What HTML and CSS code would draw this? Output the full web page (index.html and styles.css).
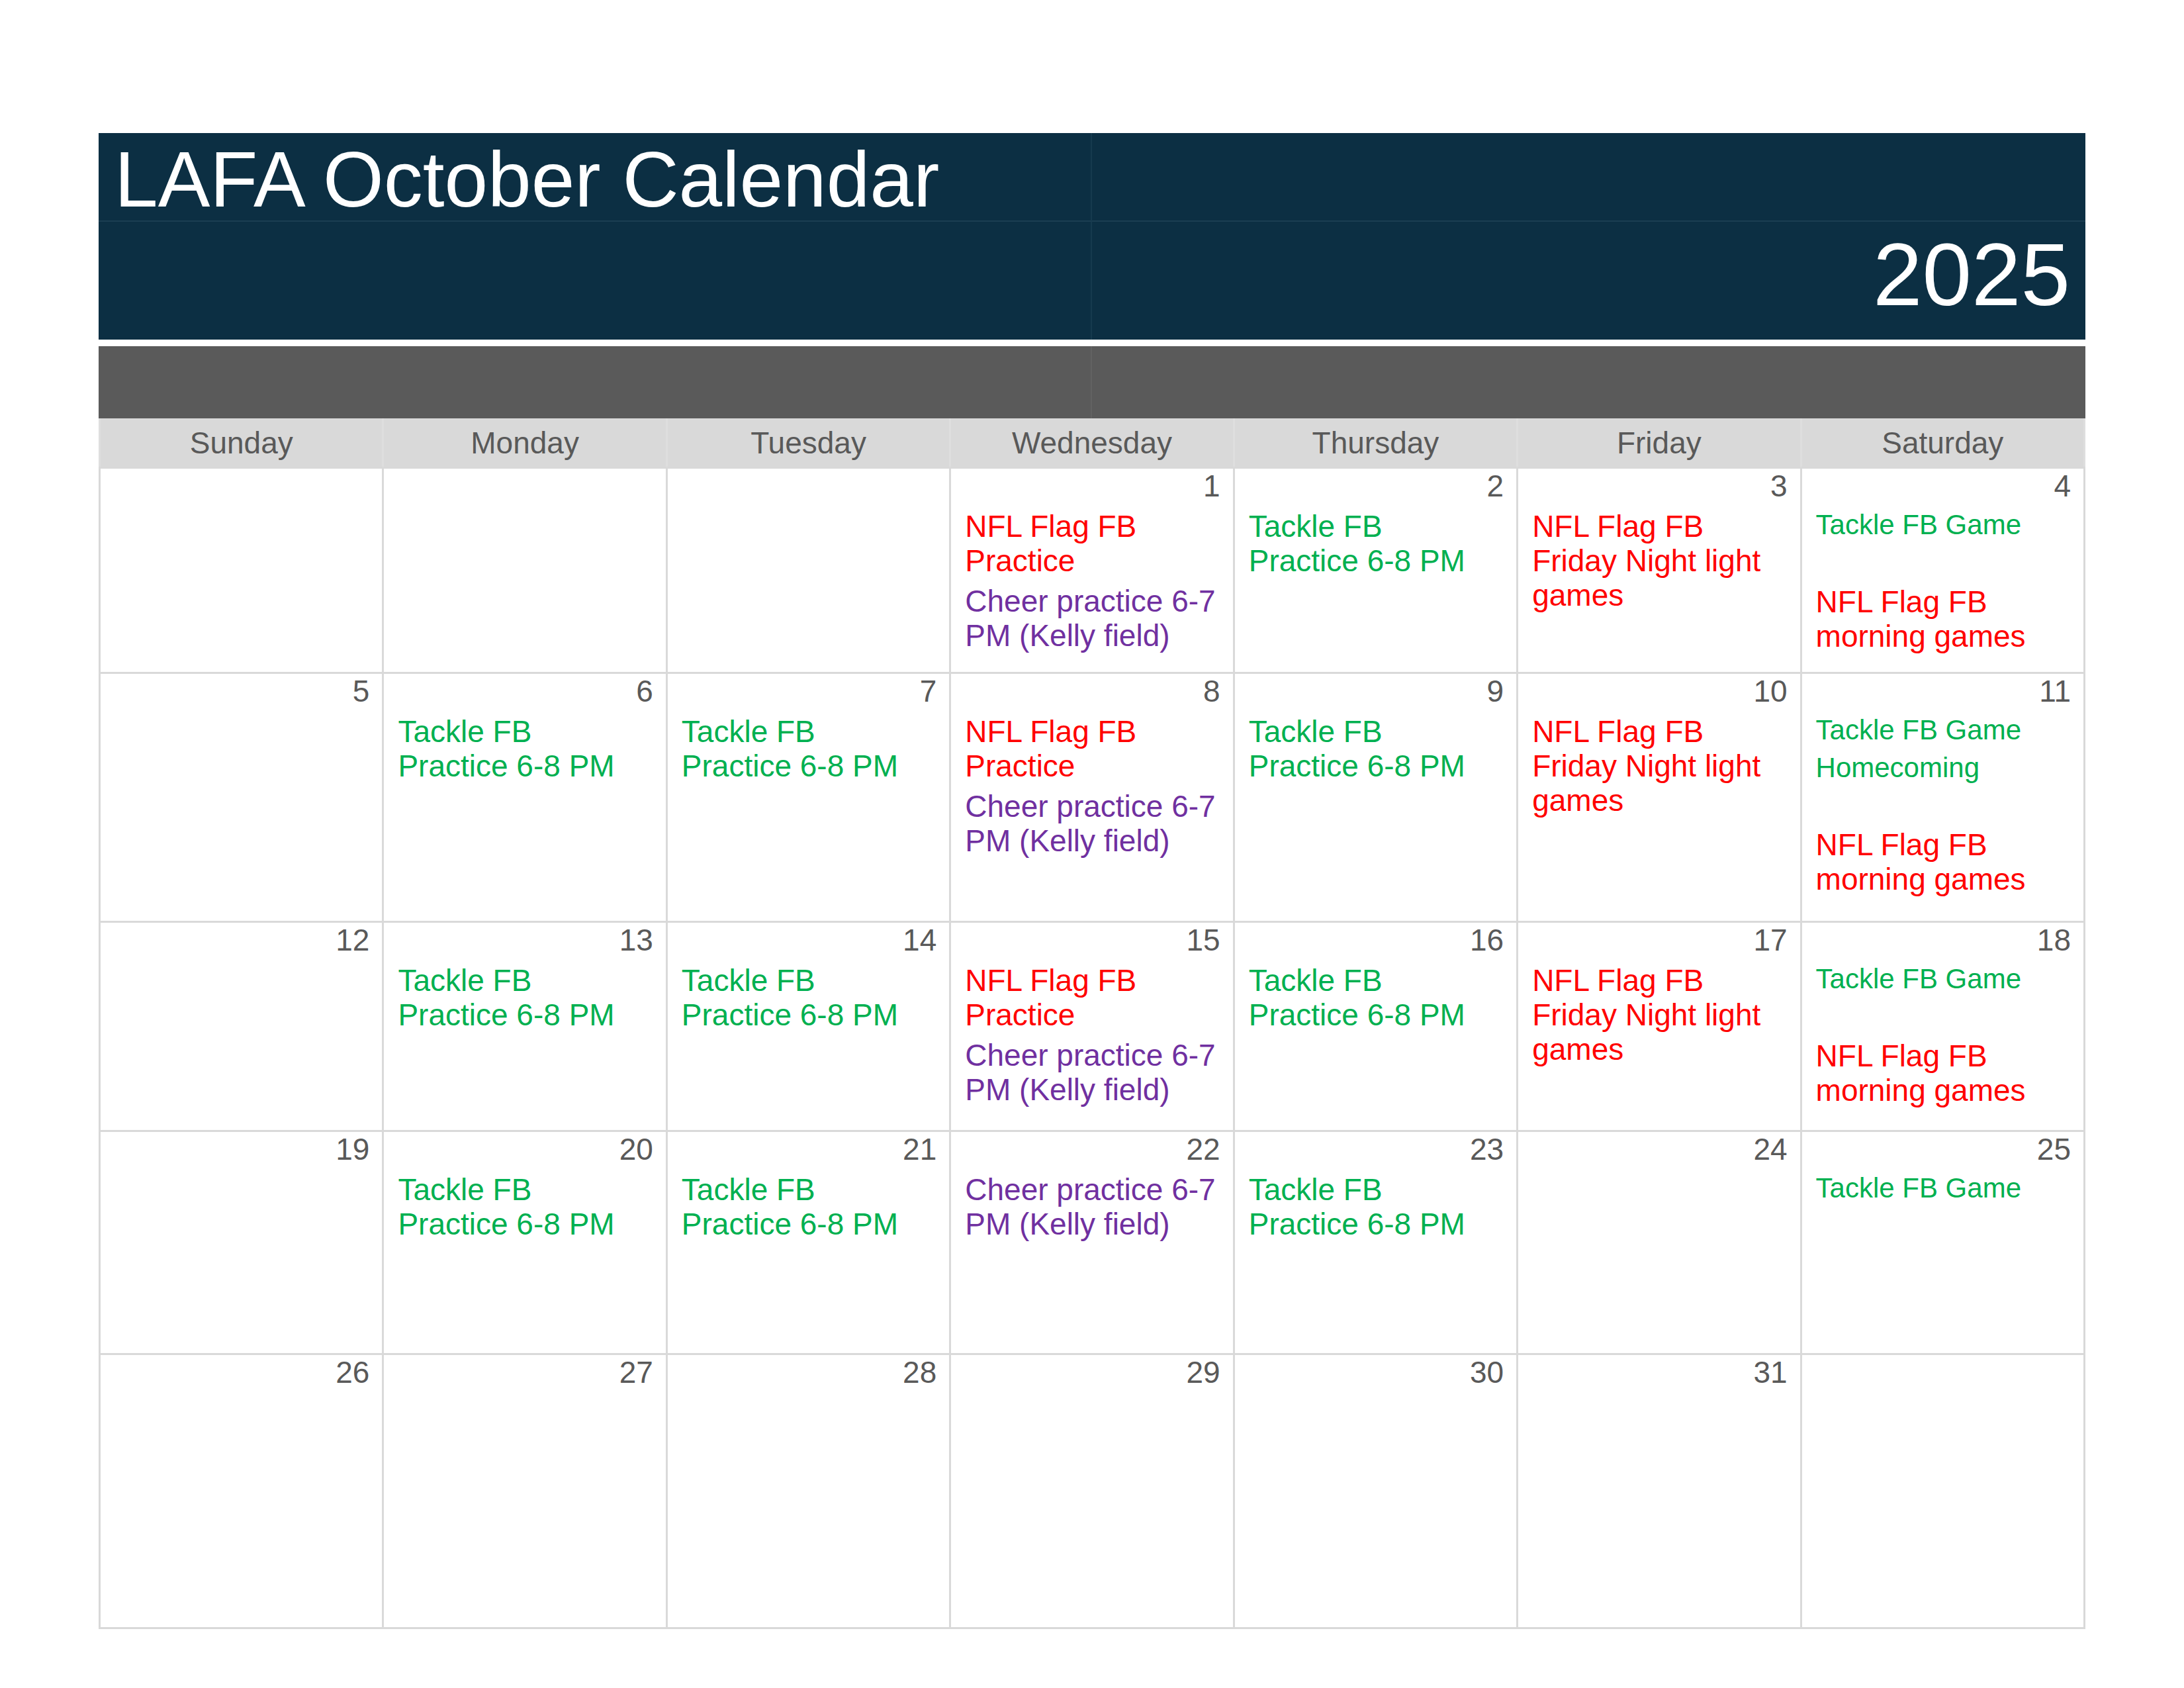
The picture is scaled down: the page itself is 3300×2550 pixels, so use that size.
FILE: index.html
```html
<!DOCTYPE html>
<html lang="en">
  <head>
    <meta charset="UTF-8">
    <meta name="viewport" content="width=device-width, initial-scale=1.0">
    <title>LAFA October Calendar</title>
    <link rel="stylesheet" href="styles.css">
  </head>
  <body>
    <div class="calendar">
      <div class="banner">
        <div class="banner-cell"><h1 class="title">LAFA October Calendar</h1></div>
        <div class="banner-cell"></div>
        <div class="banner-cell"></div>
        <div class="banner-cell year-cell"><span class="year">2025</span></div>
      </div>
      <div class="strip">
        <div class="strip-cell"></div>
        <div class="strip-cell"></div>
      </div>
      <div class="weekdays">
        <div class="weekday">Sunday</div>
        <div class="weekday">Monday</div>
        <div class="weekday">Tuesday</div>
        <div class="weekday">Wednesday</div>
        <div class="weekday">Thursday</div>
        <div class="weekday">Friday</div>
        <div class="weekday">Saturday</div>
      </div>
      <div class="days">
        <!-- week 1 -->
        <div class="day"></div>
        <div class="day"></div>
        <div class="day"></div>
        <div class="day">
          <div class="num">1</div>
          <p class="event flag">NFL Flag FB<br>Practice</p>
          <p class="event cheer">Cheer practice 6-7<br>PM (Kelly field)</p>
        </div>
        <div class="day">
          <div class="num">2</div>
          <p class="event tackle">Tackle FB<br>Practice 6-8 PM</p>
        </div>
        <div class="day">
          <div class="num">3</div>
          <p class="event flag">NFL Flag FB<br>Friday Night light<br>games</p>
        </div>
        <div class="day">
          <div class="num">4</div>
          <p class="event tackle game">Tackle FB Game</p>
          <p class="event game blank"></p>
          <p class="event flag">NFL Flag FB<br>morning games</p>
        </div>
        <!-- week 2 -->
        <div class="day"><div class="num">5</div></div>
        <div class="day">
          <div class="num">6</div>
          <p class="event tackle">Tackle FB<br>Practice 6-8 PM</p>
        </div>
        <div class="day">
          <div class="num">7</div>
          <p class="event tackle">Tackle FB<br>Practice 6-8 PM</p>
        </div>
        <div class="day">
          <div class="num">8</div>
          <p class="event flag">NFL Flag FB<br>Practice</p>
          <p class="event cheer">Cheer practice 6-7<br>PM (Kelly field)</p>
        </div>
        <div class="day">
          <div class="num">9</div>
          <p class="event tackle">Tackle FB<br>Practice 6-8 PM</p>
        </div>
        <div class="day">
          <div class="num">10</div>
          <p class="event flag">NFL Flag FB<br>Friday Night light<br>games</p>
        </div>
        <div class="day">
          <div class="num">11</div>
          <p class="event tackle game">Tackle FB Game</p>
          <p class="event tackle game">Homecoming</p>
          <p class="event game blank"></p>
          <p class="event flag">NFL Flag FB<br>morning games</p>
        </div>
        <!-- week 3 -->
        <div class="day"><div class="num">12</div></div>
        <div class="day">
          <div class="num">13</div>
          <p class="event tackle">Tackle FB<br>Practice 6-8 PM</p>
        </div>
        <div class="day">
          <div class="num">14</div>
          <p class="event tackle">Tackle FB<br>Practice 6-8 PM</p>
        </div>
        <div class="day">
          <div class="num">15</div>
          <p class="event flag">NFL Flag FB<br>Practice</p>
          <p class="event cheer">Cheer practice 6-7<br>PM (Kelly field)</p>
        </div>
        <div class="day">
          <div class="num">16</div>
          <p class="event tackle">Tackle FB<br>Practice 6-8 PM</p>
        </div>
        <div class="day">
          <div class="num">17</div>
          <p class="event flag">NFL Flag FB<br>Friday Night light<br>games</p>
        </div>
        <div class="day">
          <div class="num">18</div>
          <p class="event tackle game">Tackle FB Game</p>
          <p class="event game blank"></p>
          <p class="event flag">NFL Flag FB<br>morning games</p>
        </div>
        <!-- week 4 -->
        <div class="day"><div class="num">19</div></div>
        <div class="day">
          <div class="num">20</div>
          <p class="event tackle">Tackle FB<br>Practice 6-8 PM</p>
        </div>
        <div class="day">
          <div class="num">21</div>
          <p class="event tackle">Tackle FB<br>Practice 6-8 PM</p>
        </div>
        <div class="day">
          <div class="num">22</div>
          <p class="event cheer">Cheer practice 6-7<br>PM (Kelly field)</p>
        </div>
        <div class="day">
          <div class="num">23</div>
          <p class="event tackle">Tackle FB<br>Practice 6-8 PM</p>
        </div>
        <div class="day"><div class="num">24</div></div>
        <div class="day">
          <div class="num">25</div>
          <p class="event tackle game">Tackle FB Game</p>
        </div>
        <!-- week 5 -->
        <div class="day"><div class="num">26</div></div>
        <div class="day"><div class="num">27</div></div>
        <div class="day"><div class="num">28</div></div>
        <div class="day"><div class="num">29</div></div>
        <div class="day"><div class="num">30</div></div>
        <div class="day"><div class="num">31</div></div>
        <div class="day"></div>
      </div>
    </div>
  </body>
</html>
```

FILE: styles.css
```css
body{
  margin: 0;
  background-color: white;
  font-family: "Liberation Sans", Arial, sans-serif;
}
.calendar{
  width: 3002px;
  margin: 201px 0 0 149px;
}

/* dark title block */
.banner{
  display: grid;
  grid-template-columns: 1501px 1fr;
  grid-template-rows: 134px 178px;
  background-color: #0c2f43;
}
.banner-cell{
  border-bottom: 2px solid #1b3e52;
  border-right: 2px solid #163a4e;
}
.banner-cell:nth-child(3),
.banner-cell:nth-child(4){
  border-bottom: none;
}
.banner-cell:nth-child(2),
.banner-cell:nth-child(4){
  border-right: none;
}
.title{
  margin: 0;
  padding: 11px 0 0 24px;
  color: white;
  font-size: 118px;
  font-weight: 400;
  line-height: 1;
}
.year-cell{
  display: flex;
  justify-content: flex-end;
  align-items: flex-start;
}
.year{
  padding: 13px 23px 0 0;
  color: white;
  font-size: 134px;
  line-height: 1;
}

/* grey strip */
.strip{
  display: grid;
  grid-template-columns: 1501px 1fr;
  height: 109px;
  margin-top: 10px;
  background-color: #5a5a5a;
}
.strip-cell{
  border-right: 2px solid #626262;
}
.strip-cell:last-child{
  border-right: none;
}

/* weekday names */
.weekdays{
  display: grid;
  grid-template-columns: repeat(7, 1fr);
  gap: 3px;
  padding: 0 3px;
  background-color: #dedede;
}
.weekday{
  background-color: #d9d9d9;
  color: #595959;
  font-size: 46px;
  line-height: 75px;
  height: 73px;
  text-align: center;
}

/* month grid */
.days{
  display: grid;
  grid-template-columns: repeat(7, 1fr);
  grid-template-rows: 307px 373px 313px 334px 411px;
  gap: 3px;
  border: 3px solid #d9d9d9;
  background-color: #d9d9d9;
}
.day{
  background-color: white;
  padding: 0 19px 0 21px;
  overflow: hidden;
}
.num{
  color: #595959;
  font-size: 46px;
  line-height: 52px;
  text-align: right;
}
.event{
  margin: 9px 0 0 0;
  font-size: 46px;
  line-height: 52px;
  white-space: nowrap;
}
.game{
  font-size: 42px;
  line-height: 48px;
}
.blank{
  height: 48px;
}
.flag{
  color: #ff0000;
}
.tackle{
  color: #00b050;
}
.cheer{
  color: #7030a0;
}
```
